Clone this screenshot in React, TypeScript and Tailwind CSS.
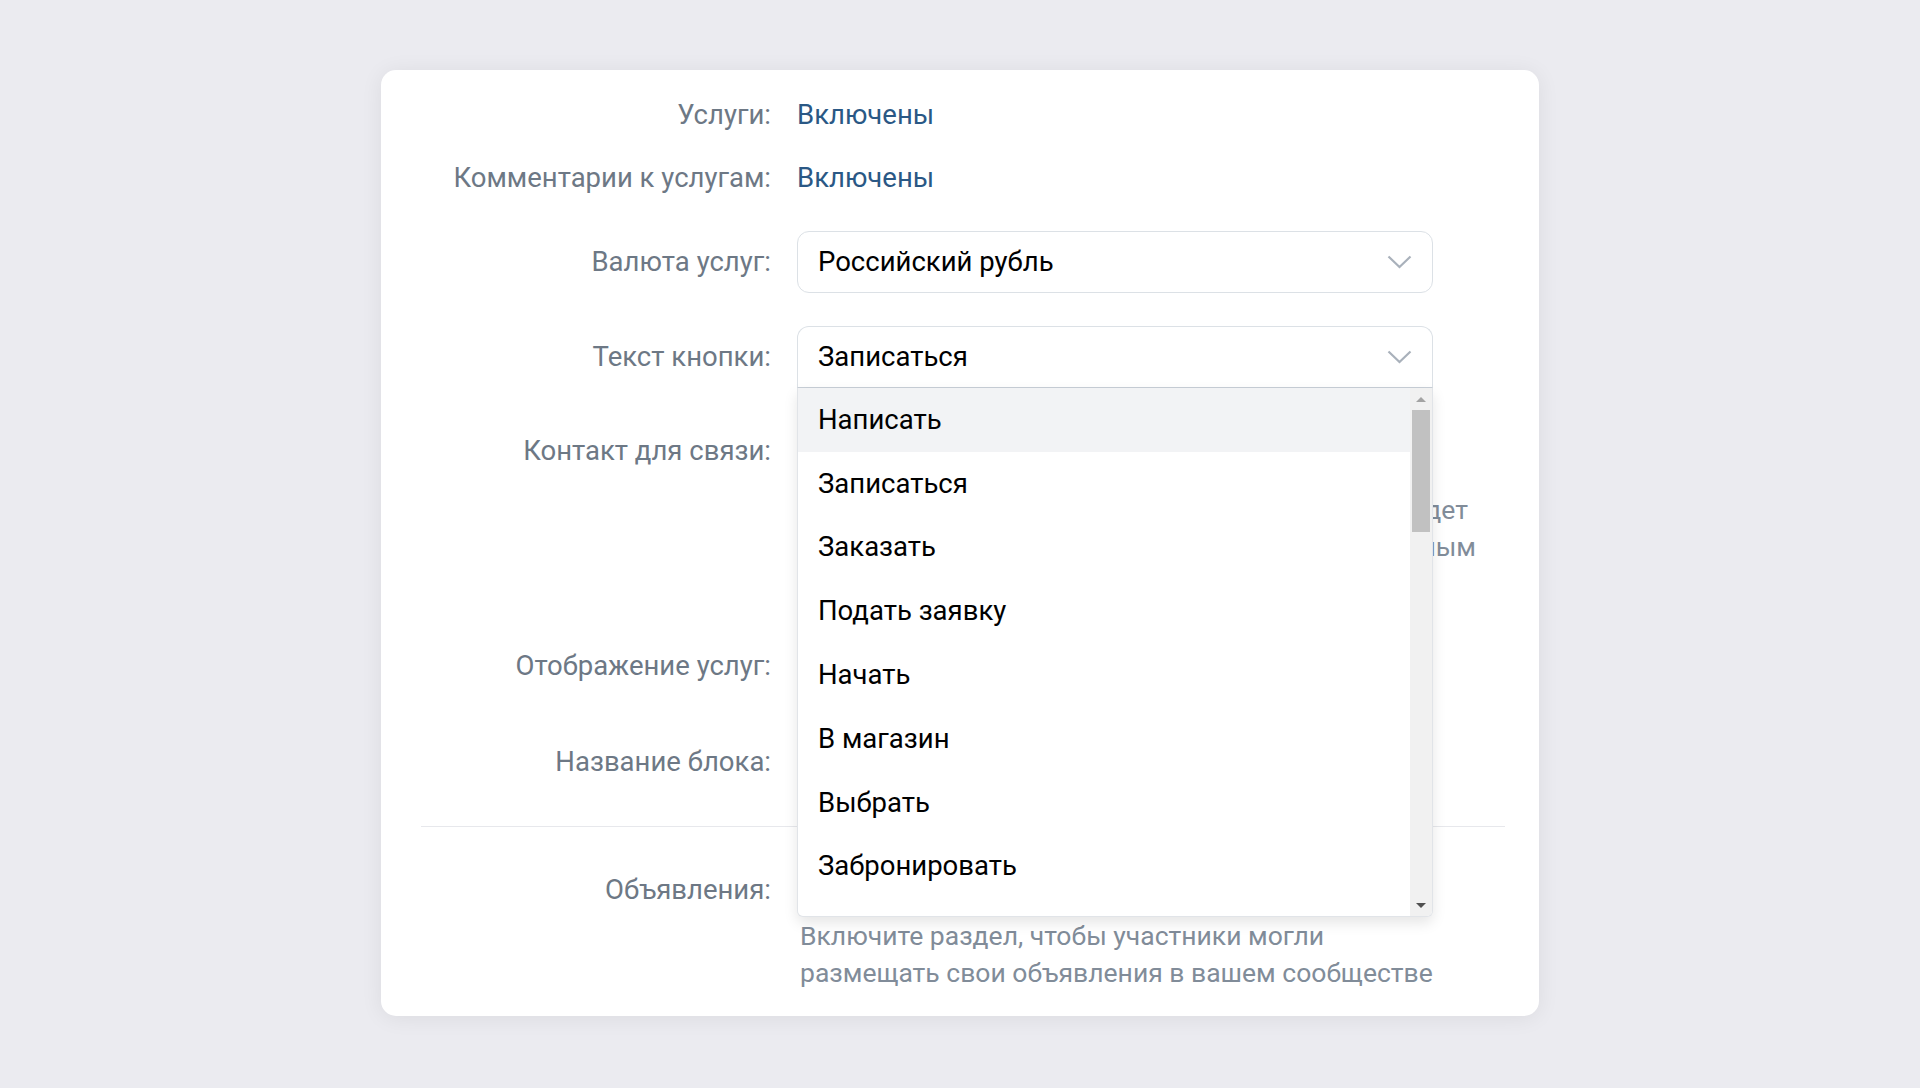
import React from 'react';

const options = [
  'Написать',
  'Записаться',
  'Заказать',
  'Подать заявку',
  'Начать',
  'В магазин',
  'Выбрать',
  'Забронировать',
];

const Chevron = () => (
  <svg width="25" height="14" viewBox="0 0 25 14" fill="none">
    <polyline points="1.5,1.5 12.5,12 23.5,1.5" stroke="#a9b1bb" strokeWidth="2.2" />
  </svg>
);

const Label = ({ children }: { children: React.ReactNode }) => (
  <div className="text-right text-[#6d7885] whitespace-nowrap">{children}</div>
);

const App = () => {
  return (
    <div className="min-h-screen bg-[#ebebf0] flex items-start justify-center pt-[70px] font-['Roboto',sans-serif] text-[27.5px] leading-9">
      {/* card */}
      <div className="w-[1158px] bg-white rounded-[15px] shadow-[0_2px_22px_rgba(0,0,0,0.07)] pl-10 pr-[34px] pt-[27px] pb-[25px]">
        <div className="grid grid-cols-[350px_636px] gap-x-[26px] items-center">
          {/* services */}
          <Label>Услуги:</Label>
          <div className="text-[#2a5885]">Включены</div>

          {/* comments */}
          <div className="col-span-2 h-[27px]" />
          <Label>Комментарии к услугам:</Label>
          <div className="text-[#2a5885]">Включены</div>

          {/* currency */}
          <div className="col-span-2 h-[35px]" />
          <Label>Валюта услуг:</Label>
          <div className="h-[62px] border border-[#dce1e6] rounded-[12px] flex items-center justify-between pl-5 pr-5 text-black">
            <span>Российский рубль</span>
            <Chevron />
          </div>

          {/* button text */}
          <div className="col-span-2 h-[33px]" />
          <Label>Текст кнопки:</Label>
          <div className="relative z-10">
            <div className="h-[62px] border border-[#dce1e6] border-b-[#c8cfd7] rounded-t-[12px] flex items-center justify-between pl-5 pr-5 text-black bg-white">
              <span>Записаться</span>
              <Chevron />
            </div>
            {/* open dropdown */}
            <div className="absolute top-full left-0 w-full h-[529px] bg-white border-x border-b border-[#e1e4e8] rounded-b-[6px] shadow-[0_6px_14px_rgba(0,0,0,0.1)] flex overflow-hidden">
              <div className="flex-1">
                {options.map((o, i) => (
                  <div
                    key={o}
                    className={`h-[63.8px] flex items-center pl-5 text-black ${i === 0 ? 'bg-[#f2f3f5]' : ''}`}
                  >
                    {o}
                  </div>
                ))}
              </div>
              {/* scrollbar */}
              <div className="w-[22px] bg-[#f1f1f1] flex flex-col items-center">
                <div className="h-[22px] flex items-center justify-center">
                  <div className="w-0 h-0 border-x-[5px] border-x-transparent border-b-[5px] border-b-[#a3a3a3]" />
                </div>
                <div className="w-[18px] h-[122px] bg-[#c1c1c1]" />
                <div className="flex-1" />
                <div className="h-[22px] flex items-center justify-center">
                  <div className="w-0 h-0 border-x-[5px] border-x-transparent border-t-[5px] border-t-[#505050]" />
                </div>
              </div>
            </div>
          </div>

          {/* contact */}
          <div className="col-span-2 h-[32px]" />
          <Label>Контакт для связи:</Label>
          <div className="h-[62px] border border-[#dce1e6] rounded-[12px]" />
          <div />
          <div className="mt-[10px] w-[679px] text-[#818c99] text-[26.5px] leading-[36.5px] whitespace-nowrap text-right">
            <div className="mr-2">Если контакт не указан, кнопка в карточке будет</div>
            <div>вести в сообщения сообщества, а не к указанным</div>
          </div>

          {/* display */}
          <div className="col-span-2 h-[70px]" />
          <Label>Отображение услуг:</Label>
          <div className="h-[62px] border border-[#dce1e6] rounded-[12px]" />

          {/* block name */}
          <div className="col-span-2 h-[34px]" />
          <Label>Название блока:</Label>
          <div className="h-[62px] border border-[#dce1e6] rounded-[12px]" />
        </div>

        <div className="h-px bg-[#e7e8ec] mt-[33px]" />

        <div className="grid grid-cols-[350px_636px] gap-x-[26px] mt-[45px]">
          <Label>Объявления:</Label>
          <div className="text-[#2a5885]">Выключены</div>
          <div />
          <div className="mt-[10px] text-[#818c99] text-[26.5px] leading-[36.5px] pl-[3px] whitespace-nowrap">
            Включите раздел, чтобы участники могли
            <br />
            размещать свои объявления в вашем сообществе
          </div>
        </div>
      </div>
    </div>
  );
};

export default App;
